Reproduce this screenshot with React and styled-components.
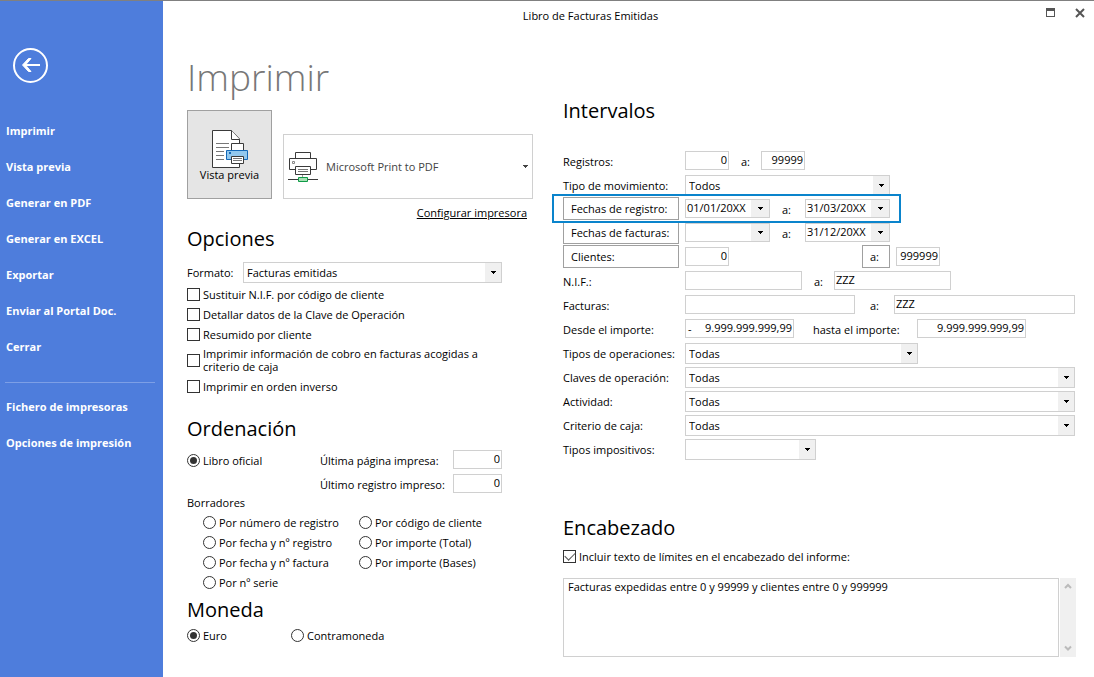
import React from 'react'
import styled, { createGlobalStyle, css } from 'styled-components'

const GlobalStyle = createGlobalStyle`
* { box-sizing:border-box; }
body {
  margin:0;
  background-color:white;
  color:#000;
}
body, input, select, button, textarea {
  font-family:"Open Sans", "Noto Sans", sans-serif;
  font-size:11px;
}
`

const Container = styled.div`
display:flex;
min-height:100vh;
border-top:1px solid #808080;
`

/* ---------- sidebar ---------- */

const Sidebar = styled.aside`
flex:0 0 163px;
padding:47px 8px 20px 5px;
background-color:#4e7ddc;
color:white;
`

const BackButton = styled.button`
display:block;
margin:0 0 29px 8px;
padding:0;
border:none;
background:none;
line-height:0;
cursor:pointer;
`

const NavLink = styled.a`
display:block;
padding-left:1px;
line-height:36px;
font-weight:700;
color:white;
text-decoration:none;
`

const Divider = styled.hr`
margin:17px 0 6px;
border:none;
border-top:1px solid #7d9fe6;
`

/* ---------- page ---------- */

const Page = styled.div`
flex:1;
min-width:0;
`

const TitleBar = styled.header`
display:flex;
height:29px;
`

const WindowTitle = styled.div`
flex:1;
text-align:center;
line-height:29px;
`

const WindowButtons = styled.div`
display:flex;
align-items:center;
justify-content:space-between;
width:76px;
padding:0 9px 6px 28px;
`

const WindowButton = styled.button`
padding:0;
border:none;
background:none;
line-height:0;
cursor:pointer;
`

const Columns = styled.main`
display:grid;
grid-template-columns:346px minmax(0, 1fr);
gap:30px;
padding:0 19px 20px 24px;
`

const Column = styled.div`
padding-top:${(props) => props.$top}px;
`

const Heading = styled.h1`
margin:0 0 9px;
font-size:37px;
font-weight:300;
line-height:48px;
color:#777;
`

const Subtitle = styled.h2`
margin:${(props) => props.$top || 0}px 0 ${(props) => props.$bottom || 0}px;
font-size:20px;
font-weight:400;
line-height:30px;
`

/* ---------- printer ---------- */

const PrinterRow = styled.div`
display:flex;
align-items:flex-end;
gap:11px;
`

const PreviewButton = styled.button`
display:flex;
flex-direction:column;
align-items:center;
justify-content:center;
width:85px;
height:89px;
padding:2px 0 0;
border:1px solid #a0a0a0;
background-color:#e5e5e5;
color:#000;
line-height:14px;
cursor:pointer;
`

const PrinterSelect = styled.button`
flex:1;
display:flex;
align-items:center;
gap:7px;
height:65px;
padding:0 4px;
border:1px solid #d0d0d0;
background-color:white;
color:#444;
text-align:left;
cursor:pointer;
`

const PrinterName = styled.span`
flex:1;
`

const ConfigLink = styled.a`
display:block;
margin:6px 6px 3px 0;
line-height:16px;
text-align:right;
color:#000;
`

/* ---------- fields ---------- */

const Row = styled.div`
display:flex;
align-items:flex-start;
height:24px;
${(props) => props.$highlight && css`
  position:relative;
  z-index:1;
  width:fit-content;
  &::after {
    content:"";
    position:absolute;
    inset:-3px -11px -2px;
    border:2px solid #0a84cc;
    pointer-events:none;
  }
`}
`

const Label = styled.label`
flex:0 0 ${(props) => props.$width || 122}px;
padding-left:${(props) => props.$indent || 0}px;
line-height:25px;
white-space:nowrap;
`

const LabelCell = styled.div`
flex:none;
display:flex;
width:${(props) => props.$width || 116}px;
margin-right:6px;
`

const LabelButton = styled.button`
flex:1;
height:23px;
padding:0 7px;
border:1px solid #a0a0a0;
background-color:white;
color:#000;
text-align:left;
cursor:pointer;
`

const Gap = styled.div`
flex:0 0 133px;
`

const Input = styled.input`
flex:${(props) => (props.$width ? `0 0 ${props.$width}px` : '1')};
min-width:0;
height:19px;
margin-top:2px;
padding:0 1px 2px;
border:1px solid #d0d0d0;
border-radius:0;
outline:none;
background-color:white;
text-align:${(props) => (props.$right ? 'right' : 'left')};
`

const Group = styled.div`
flex:none;
display:flex;
width:${(props) => props.$width}px;
height:19px;
margin-top:2px;
border:1px solid #d0d0d0;
`

const GroupInput = styled.input`
flex:1;
min-width:0;
padding:0 1px 2px;
border:none;
outline:none;
text-align:${(props) => (props.$right ? 'right' : 'left')};
`

const Sign = styled.span`
padding-left:2px;
line-height:18px;
`

const DropButton = styled.button`
display:flex;
align-items:center;
justify-content:center;
width:18px;
padding:0;
border:none;
background-color:#f0f0f0;
cursor:pointer;
`

const SelectBox = styled.div`
flex:${(props) => (props.$width ? `0 0 ${props.$width}px` : '1')};
display:grid;
height:21px;
margin-top:2px;
border:1px solid #d0d0d0;
`

const NativeSelect = styled.select`
grid-area:1 / 1;
min-width:0;
padding:0 18px 0 3px;
border:none;
border-radius:0;
outline:none;
appearance:none;
background-color:white;
color:#000;
`

const SelectArrow = styled.span`
grid-area:1 / 1;
justify-self:end;
display:flex;
align-items:center;
justify-content:center;
width:16px;
background-color:#f0f0f0;
pointer-events:none;
`

/* ---------- checks and radios ---------- */

const Choice = styled.label`
display:flex;
align-items:center;
gap:3px;
min-height:${(props) => (props.$tall ? 32 : 20)}px;
line-height:13px;
`

const Checkbox = styled.input`
appearance:none;
flex:none;
display:grid;
place-items:center;
width:13px;
height:13px;
margin:0;
border:1px solid #333;
background-color:white;
&:checked::before {
  content:"";
  width:9px;
  height:5px;
  margin-bottom:3px;
  border:solid #555;
  border-width:0 0 1px 1px;
  transform:rotate(-45deg);
}
`

const Radio = styled.input`
appearance:none;
flex:none;
display:grid;
place-items:center;
width:13px;
height:13px;
margin:0;
border:1px solid #333;
border-radius:50%;
background-color:white;
&:checked::before {
  content:"";
  width:7px;
  height:7px;
  border-radius:50%;
  background-color:#333;
}
`

const OfficialRow = styled.div`
display:grid;
grid-template-columns:133px 1fr;
height:45px;
`

const OfficialOption = styled.div`
padding-top:2px;
`

const DraftLabel = styled.div`
line-height:19px;
`

const DraftGrid = styled.div`
display:grid;
grid-template-columns:156px 1fr;
grid-template-rows:repeat(4, 20px);
grid-auto-flow:column;
padding-left:16px;
`

const CurrencyRow = styled.div`
display:grid;
grid-template-columns:104px 1fr;
`

/* ---------- header text ---------- */

const TextRow = styled.div`
display:flex;
gap:1px;
height:79px;
margin:12px -1px 0 0;
`

const TextArea = styled.textarea`
flex:1;
min-width:0;
padding:0 4px;
border:1px solid #d0d0d0;
border-radius:0;
outline:none;
resize:none;
line-height:15px;
`

const ScrollBar = styled.div`
display:flex;
flex-direction:column;
justify-content:space-between;
width:16px;
background-color:#f0f0f0;
`

const ScrollButton = styled.button`
height:17px;
padding:0;
border:none;
background:none;
line-height:0;
`

/* ---------- icons ---------- */

const Arrow = () => (
  <svg width="5" height="3" viewBox="0 0 5 3" shapeRendering="crispEdges">
    <path d="M0 0h5v1H4v1H3v1H2V2H1V1H0z" fill="currentColor" />
  </svg>
)

const BackIcon = () => (
  <svg width="36" height="36" viewBox="0 0 36 36" fill="none" stroke="white">
    <circle cx="17.5" cy="17.5" r="16.5" strokeWidth="2" />
    <path d="M27 17H11" strokeWidth="2" />
    <path d="M18 10.500h-2.500L9.500 17l6 6.500H18L12.500 17z" fill="white" strokeWidth="1" />
  </svg>
)

const MaximizeIcon = () => (
  <svg width="9" height="9" viewBox="0 0 9 9" shapeRendering="crispEdges">
    <path d="M0 0h9v9H0zM1 3v5h7V3z" fill="#555" fillRule="evenodd" />
  </svg>
)

const CloseIcon = () => (
  <svg width="10" height="10" viewBox="0 0 10 10">
    <path d="M1 1l8 8M9 1l-8 8" stroke="#555" strokeWidth="2" />
  </svg>
)

const PreviewIcon = () => (
  <svg width="37" height="39" viewBox="0 0 37 39" fill="white" stroke="#3a3a3a">
    <path d="M1.500 1.500H20.500L28.500 10V38.500H1.500z" />
    <path d="M20.500 1.500V10.500H28.500" />
    <path d="M5 14.500H18M5 18.500H18M5 22.500H13M5 26.500H13M5 30.500H13" stroke="#777" />
    <path d="M20.500 14.500H32.500V21.500H20.500z" />
    <path d="M15.500 21.500H36.500V30.500H15.500z" fill="#92c8ee" stroke="#1469b8" />
    <path d="M18 23h2v2h-2z" fill="#1469b8" stroke="none" />
    <path d="M20.500 27.500H32.500V34.500H20.500z" />
    <path d="M22 29.500H31M22 31.500H31" stroke="#777" />
  </svg>
)

const PrinterIcon = () => (
  <svg width="31" height="32" viewBox="0 0 31 32" fill="white" stroke="#3a3a3a">
    <path d="M7.500 1.500H22.500V7.500H7.500z" />
    <path d="M1.500 7.500H28.500V18.500H1.500z" />
    <path d="M4.500 10.500h2v2h-2z" stroke="#888" />
    <path d="M7.500 15.500H22.500V23.500H7.500z" />
    <path d="M10 18.500H20M10 20.500H20" stroke="#777" />
    <path d="M14.500 24V26" stroke="#999" />
    <path d="M0 28.500H30" />
    <path d="M10.500 26.500H19.500V30.500H10.500z" fill="#a9dfb5" stroke="#0e9b47" />
  </svg>
)

const Chevron = ({ down }) => (
  <svg width="8" height="7" viewBox="0 0 8 7">
    <path d={down ? 'M1 1.500l3 3 3-3' : 'M1 5l3-3 3 3'} fill="none" stroke="#bbb" strokeWidth="2" />
  </svg>
)

/* ---------- composed fields ---------- */

const Select = ({ id, value, width }) => (
  <SelectBox $width={width}>
    <NativeSelect id={id} defaultValue={value}>
      <option>{value}</option>
    </NativeSelect>
    <SelectArrow><Arrow /></SelectArrow>
  </SelectBox>
)

const DateInput = ({ id, value, label }) => (
  <Group $width={85}>
    <GroupInput id={id} aria-label={label} type="text" defaultValue={value} />
    <DropButton type="button" aria-label="Abrir calendario"><Arrow /></DropButton>
  </Group>
)

const Check = ({ children, checked, tall }) => (
  <Choice $tall={tall}>
    <Checkbox type="checkbox" defaultChecked={checked} />
    <span>{children}</span>
  </Choice>
)

const Option = ({ name, children, checked }) => (
  <Choice>
    <Radio type="radio" name={name} defaultChecked={checked} />
    <span>{children}</span>
  </Choice>
)

const links = ['Imprimir', 'Vista previa', 'Generar en PDF', 'Generar en EXCEL', 'Exportar', 'Enviar al Portal Doc.', 'Cerrar']
const settings = ['Fichero de impresoras', 'Opciones de impresión']

const drafts = [
  'Por número de registro',
  'Por fecha y nº registro',
  'Por fecha y nº factura',
  'Por nº serie',
  'Por código de cliente',
  'Por importe (Total)',
  'Por importe (Bases)',
]

const filters = [
  { id: 'operaciones', label: 'Tipos de operaciones:', value: 'Todas', width: 233 },
  { id: 'claves', label: 'Claves de operación:', value: 'Todas' },
  { id: 'actividad', label: 'Actividad:', value: 'Todas' },
  { id: 'caja', label: 'Criterio de caja:', value: 'Todas' },
  { id: 'impositivos', label: 'Tipos impositivos:', value: '', width: 131 },
]

const App = () => {
  return (
    <Container>
      <GlobalStyle />
      <Sidebar>
        <BackButton type="button" aria-label="Volver"><BackIcon /></BackButton>
        <nav>
          {links.map((text) => <NavLink href="#" key={text}>{text}</NavLink>)}
          <Divider />
          {settings.map((text) => <NavLink href="#" key={text}>{text}</NavLink>)}
        </nav>
      </Sidebar>
      <Page>
        <TitleBar>
          <WindowTitle>Libro de Facturas Emitidas</WindowTitle>
          <WindowButtons>
            <WindowButton type="button" aria-label="Maximizar"><MaximizeIcon /></WindowButton>
            <WindowButton type="button" aria-label="Cerrar ventana"><CloseIcon /></WindowButton>
          </WindowButtons>
        </TitleBar>
        <Columns>
          <Column $top={23}>
            <Heading>Imprimir</Heading>
            <PrinterRow>
              <PreviewButton type="button">
                <PreviewIcon />
                Vista previa
              </PreviewButton>
              <PrinterSelect type="button">
                <PrinterIcon />
                <PrinterName>Microsoft Print to PDF</PrinterName>
                <Arrow />
              </PrinterSelect>
            </PrinterRow>
            <ConfigLink href="#">Configurar impresora</ConfigLink>

            <Subtitle $bottom={6}>Opciones</Subtitle>
            <Row>
              <Label htmlFor="formato" $width={56}>Formato:</Label>
              <Select id="formato" value="Facturas emitidas" width={259} />
            </Row>
            <Check>Sustituir N.I.F. por código de cliente</Check>
            <Check>Detallar datos de la Clave de Operación</Check>
            <Check>Resumido por cliente</Check>
            <Check tall>Imprimir información de cobro en facturas acogidas a<br />criterio de caja</Check>
            <Check>Imprimir en orden inverso</Check>

            <Subtitle $top={18} $bottom={4}>Ordenación</Subtitle>
            <OfficialRow>
              <OfficialOption>
                <Option name="orden" checked>Libro oficial</Option>
              </OfficialOption>
              <div>
                <Row>
                  <Label htmlFor="pagina" $width={133}>Última página impresa:</Label>
                  <Input id="pagina" type="text" defaultValue="0" $width={49} $right />
                </Row>
                <Row>
                  <Label htmlFor="registro" $width={133}>Último registro impreso:</Label>
                  <Input id="registro" type="text" defaultValue="0" $width={49} $right />
                </Row>
              </div>
            </OfficialRow>
            <DraftLabel>Borradores</DraftLabel>
            <DraftGrid>
              {drafts.map((text) => <Option name="orden" key={text}>{text}</Option>)}
            </DraftGrid>

            <Subtitle $top={3}>Moneda</Subtitle>
            <CurrencyRow>
              <Option name="moneda" checked>Euro</Option>
              <Option name="moneda">Contramoneda</Option>
            </CurrencyRow>
          </Column>

          <Column $top={66}>
            <Subtitle $bottom={23}>Intervalos</Subtitle>
            <Row>
              <Label htmlFor="registros">Registros:</Label>
              <Input id="registros" type="text" defaultValue="0" $width={44} $right />
              <Label htmlFor="registros-fin" $width={32} $indent={12}>a:</Label>
              <Input id="registros-fin" type="text" defaultValue="99999" $width={44} $right />
            </Row>
            <Row>
              <Label htmlFor="movimiento">Tipo de movimiento:</Label>
              <Select id="movimiento" value="Todos" width={205} />
            </Row>
            <Row $highlight>
              <LabelCell><LabelButton type="button">Fechas de registro:</LabelButton></LabelCell>
              <DateInput label="Fecha de registro inicial" value="01/01/20XX" />
              <Label htmlFor="fecha-registro-fin" $width={35} $indent={12}>a:</Label>
              <DateInput id="fecha-registro-fin" value="31/03/20XX" />
            </Row>
            <Row>
              <LabelCell><LabelButton type="button">Fechas de facturas:</LabelButton></LabelCell>
              <DateInput label="Fecha de factura inicial" value="" />
              <Label htmlFor="fecha-factura-fin" $width={35} $indent={12}>a:</Label>
              <DateInput id="fecha-factura-fin" value="31/12/20XX" />
            </Row>
            <Row>
              <LabelCell><LabelButton type="button">Clientes:</LabelButton></LabelCell>
              <Input aria-label="Cliente inicial" type="text" defaultValue="0" $width={44} $right />
              <Gap />
              <LabelCell $width={28}><LabelButton type="button">a:</LabelButton></LabelCell>
              <Input aria-label="Cliente final" type="text" defaultValue="999999" $width={44} $right />
            </Row>
            <Row>
              <Label htmlFor="nif">N.I.F.:</Label>
              <Input id="nif" type="text" $width={117} />
              <Label htmlFor="nif-fin" $width={32} $indent={12}>a:</Label>
              <Input id="nif-fin" type="text" defaultValue="ZZZ" $width={117} />
            </Row>
            <Row>
              <Label htmlFor="facturas">Facturas:</Label>
              <Input id="facturas" type="text" $width={170} />
              <Label htmlFor="facturas-fin" $width={39} $indent={15}>a:</Label>
              <Input id="facturas-fin" type="text" defaultValue="ZZZ" />
            </Row>
            <Row>
              <Label htmlFor="importe">Desde el importe:</Label>
              <Group $width={109}>
                <Sign>-</Sign>
                <GroupInput id="importe" type="text" defaultValue="9.999.999.999,99" $right />
              </Group>
              <Label htmlFor="importe-fin" $width={123} $indent={19}>hasta el importe:</Label>
              <Input id="importe-fin" type="text" defaultValue="9.999.999.999,99" $width={109} $right />
            </Row>
            {filters.map(({ id, label, value, width }) => (
              <Row key={id}>
                <Label htmlFor={id}>{label}</Label>
                <Select id={id} value={value} width={width} />
              </Row>
            ))}

            <Subtitle $top={52} $bottom={3}>Encabezado</Subtitle>
            <Check checked>Incluir texto de límites en el encabezado del informe:</Check>
            <TextRow>
              <TextArea aria-label="Texto del encabezado" defaultValue="Facturas expedidas entre 0 y 99999 y clientes entre 0 y 999999" />
              <ScrollBar>
                <ScrollButton type="button" aria-label="Subir"><Chevron /></ScrollButton>
                <ScrollButton type="button" aria-label="Bajar"><Chevron down /></ScrollButton>
              </ScrollBar>
            </TextRow>
          </Column>
        </Columns>
      </Page>
    </Container>
  )
}

export default App
